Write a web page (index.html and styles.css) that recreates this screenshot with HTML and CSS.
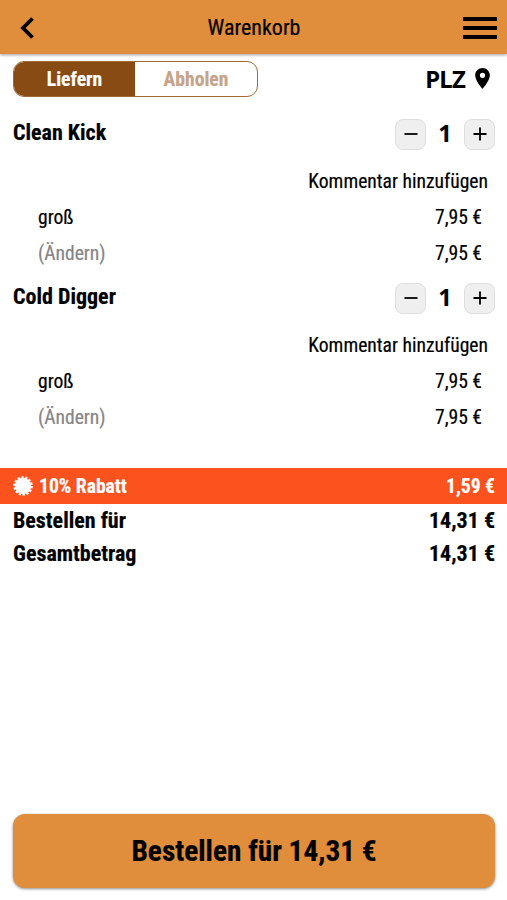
FILE: index.html
```html
<!DOCTYPE html>
<html lang="de">
<head>
<meta charset="UTF-8">
<meta name="viewport" content="width=device-width, initial-scale=1.0">
<title>Warenkorb</title>
<link rel="stylesheet" href="styles.css">
</head>
<body>
<header class="topbar">
  <svg class="back" width="14" height="22" viewBox="0 0 14 22"><path d="M12.5 1.5L3 11l9.5 9.5" fill="none" stroke="#000" stroke-width="3.8"/></svg>
  <h1><span class="t">Warenkorb</span></h1>
  <div class="menu"><i></i><i></i><i></i></div>
</header>

<div class="options">
  <div class="toggle">
    <div class="active"><span class="t">Liefern</span></div>
    <div><span class="t">Abholen</span></div>
  </div>
  <div class="plz">
    <span>PLZ</span>
    <svg width="15" height="21" viewBox="5 2 14 20"><path d="M12 2C8.13 2 5 5.13 5 9c0 5.25 7 13 7 13s7-7.75 7-13c0-3.87-3.13-7-7-7zm0 9.500a2.500 2.500 0 1 1 0-5 2.500 2.500 0 0 1 0 5z"/></svg>
  </div>
</div>

<main>
  <section class="item">
    <div class="item-head">
      <h2><span class="t">Clean Kick</span></h2>
      <div class="stepper">
        <button><svg width="14" height="14" viewBox="0 0 14 14"><path d="M0.500 7h13"/></svg></button>
        <b>1</b>
        <button><svg width="14" height="14" viewBox="0 0 14 14"><path d="M0.500 7h13M7 0.500v13"/></svg></button>
      </div>
    </div>
    <div class="comment"><span class="t">Kommentar hinzufügen</span></div>
    <div class="row"><span class="t">groß</span><span class="t">7,95 €</span></div>
    <div class="row"><span class="t change">(Ändern)</span><span class="t">7,95 €</span></div>
  </section>

  <section class="item">
    <div class="item-head">
      <h2><span class="t">Cold Digger</span></h2>
      <div class="stepper">
        <button><svg width="14" height="14" viewBox="0 0 14 14"><path d="M0.500 7h13"/></svg></button>
        <b>1</b>
        <button><svg width="14" height="14" viewBox="0 0 14 14"><path d="M0.500 7h13M7 0.500v13"/></svg></button>
      </div>
    </div>
    <div class="comment"><span class="t">Kommentar hinzufügen</span></div>
    <div class="row"><span class="t">groß</span><span class="t">7,95 €</span></div>
    <div class="row"><span class="t change">(Ändern)</span><span class="t">7,95 €</span></div>
  </section>
</main>

<div class="discount">
  <svg width="20" height="20" viewBox="-10 -10 20 20"><circle r="8.200"/><circle r="8.700" fill="none" stroke="#fff" stroke-width="2.200" stroke-dasharray="2.300 1.604"/></svg>
  <span class="t">10% Rabatt</span>
  <span class="t amount">1,59 €</span>
</div>
<div class="total"><span class="t">Bestellen für</span><span class="t">14,31 €</span></div>
<div class="total"><span class="t">Gesamtbetrag</span><span class="t">14,31 €</span></div>

<button class="order"><span class="t">Bestellen für 14,31 €</span></button>
</body>
</html>
```
FILE: styles.css
```css
* {
  box-sizing: border-box;
}

body {
  margin: 0;
  height: 900px;
  display: flex;
  flex-direction: column;
  overflow: hidden;
  background: #fff;
  color: #000;
  font-family: "Roboto Condensed", Roboto, sans-serif;
  font-stretch: 75%;
  font-size: 19.6px;
  -webkit-text-stroke: 0.2px;
}

h1, h2 {
  margin: 0;
  font-size: 22px;
}

.t {
  white-space: nowrap;
}

.topbar {
  height: 54px;
  flex: none;
  display: flex;
  align-items: center;
  justify-content: space-between;
  padding: 2px 10px 0 20px;
  background: #e08d3c;
  box-shadow: 0 1px 3px rgba(0,0,0,0.4);
}

.topbar h1 {
  font-weight: 400;
  padding-left: 11px;
  padding-bottom: 1px;
}

.menu {
  width: 34px;
  display: flex;
  flex-direction: column;
  gap: 5px;
}

.menu i {
  height: 4px;
  background: #000;
}

.options {
  display: flex;
  justify-content: space-between;
  align-items: center;
  height: 36px;
  margin-top: 7px;
  padding: 0 17px 0 13px;
}

.toggle {
  display: flex;
  width: 245px;
  height: 36px;
  border: 1px solid #a06a38;
  border-radius: 11px;
  overflow: hidden;
  font-weight: 700;
  color: #c6a489;
}

.toggle div {
  flex: 1;
  display: flex;
  align-items: center;
  justify-content: center;
}

.toggle .active {
  flex: none;
  width: 121px;
  background: #874b13;
  color: #fff;
}

.plz {
  display: flex;
  align-items: center;
  gap: 10px;
  padding-bottom: 1px;
  font-family: "Noto Sans", sans-serif;
  font-size: 24px;
  font-weight: 700;
  -webkit-text-stroke: 0;
}

.plz span {
  line-height: 34px;
  letter-spacing: -0.8px;
}

main {
  padding: 22px 12px 0 13px;
}

.item {
  height: 164px;
}

.item-head {
  display: flex;
  justify-content: space-between;
  height: 30px;
}

.item-head h2 {
  line-height: 27px;
}

.stepper {
  display: flex;
  align-items: center;
}

.stepper b {
  width: 38px;
  text-align: center;
  font-family: "Noto Sans", sans-serif;
  font-size: 23px;
  line-height: 28px;
  padding-bottom: 2px;
}

.stepper button {
  width: 31px;
  height: 31px;
  padding: 0;
  display: flex;
  align-items: center;
  justify-content: center;
  background: #efefef;
  border: 1px solid #dedede;
  border-radius: 8px;
}

.stepper path {
  stroke: #000;
  stroke-width: 1.8;
}

.comment {
  height: 36px;
  margin-top: 15px;
  padding-right: 7px;
  line-height: 36px;
  text-align: right;
}

.row {
  display: flex;
  justify-content: space-between;
  height: 36px;
  line-height: 36px;
  padding: 0 13px 0 25px;
}

.change {
  color: #858585;
}

.discount {
  display: flex;
  align-items: center;
  height: 36px;
  margin-top: 21px;
  padding: 0 12px 0 13px;
  background: #fc521e;
  color: #fff;
  fill: #fff;
  font-weight: 700;
}

.discount svg {
  margin-right: 6px;
}

.discount .amount {
  margin-left: auto;
}

.total {
  display: flex;
  justify-content: space-between;
  height: 33px;
  line-height: 33px;
  padding: 0 12px 0 13px;
  font-size: 22px;
  font-weight: 700;
}

.order {
  height: 74px;
  margin: auto 12px 12px 13px;
  padding-bottom: 1px;
  border: 0;
  border-radius: 12px;
  background: #e08d3c;
  box-shadow: 0 1px 3px rgba(0,0,0,0.45);
  color: #000;
  font: inherit;
  font-size: 29.3px;
  font-weight: 700;
}
```
